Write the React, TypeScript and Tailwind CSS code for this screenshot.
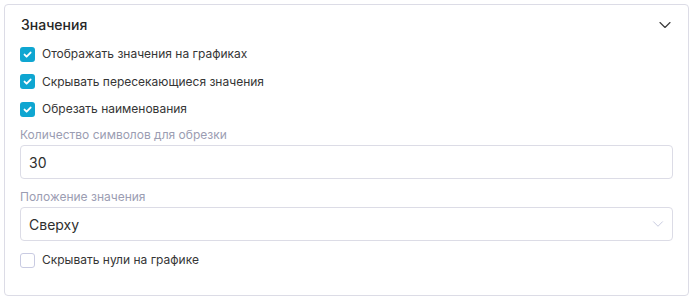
import { ChevronDown } from "lucide-react";

const font = { fontFamily: "Inter, 'Noto Sans', sans-serif" };

function Checkbox({ checked, label }: { checked: boolean; label: string }) {
  return (
    <label className="flex h-[20px] items-center gap-[7px] text-[12px] text-[#353535]">
      {checked ? (
        <span className="flex h-[15px] w-[15px] items-center justify-center rounded-[3px] bg-[#0fa6d1]">
          <svg width="11" height="11" viewBox="0 0 10 10" fill="none">
            <path d="M2.3 5.1 4.2 7 7.8 3.2" stroke="white" strokeWidth="1.7" strokeLinecap="round" strokeLinejoin="round" />
          </svg>
        </span>
      ) : (
        <span className="h-[15px] w-[15px] rounded-[3px] border border-[#c9cbe2] bg-white" />
      )}
      <span>{label}</span>
    </label>
  );
}

export default function App() {
  return (
    <div className="bg-white p-[4px]" style={font}>
      <section className="rounded-[4px] border border-[#dcdce6] px-[15px] pb-[25px]">
        <div className="flex h-[39px] items-center justify-between pl-[1px]">
          <h2 className="text-[14px] font-medium text-[#262626]">Значения</h2>
          <ChevronDown size={20} strokeWidth={1.4} className="-mr-[2px] text-[#3c3c3c]" />
        </div>
        <div className="flex flex-col gap-[7.5px]">
          <Checkbox checked label="Отображать значения на графиках" />
          <Checkbox checked label="Скрывать пересекающиеся значения" />
          <Checkbox checked label="Обрезать наименования" />
        </div>
        <p className="mt-[8px] h-[16px] text-[12px] leading-[16px] text-[#9b9db2]">
          Количество символов для обрезки
        </p>
        <div className="mt-[2px] flex h-[34px] items-center rounded-[4px] border border-[#dcdce6] px-[8px] text-[14px] text-[#2e2e2e]">
          30
        </div>
        <p className="mt-[10px] h-[16px] text-[12px] leading-[16px] text-[#9b9db2]">
          Положение значения
        </p>
        <div className="mt-[2px] flex h-[34px] items-center justify-between rounded-[4px] border border-[#dcdce6] pl-[8px] pr-[5px] text-[14px] text-[#2e2e2e]">
          <span>Сверху</span>
          <ChevronDown size={18} strokeWidth={1.2} className="text-[#c3c5dc]" />
        </div>
        <div className="mt-[9px]">
          <Checkbox checked={false} label="Скрывать нули на графике" />
        </div>
      </section>
    </div>
  );
}
